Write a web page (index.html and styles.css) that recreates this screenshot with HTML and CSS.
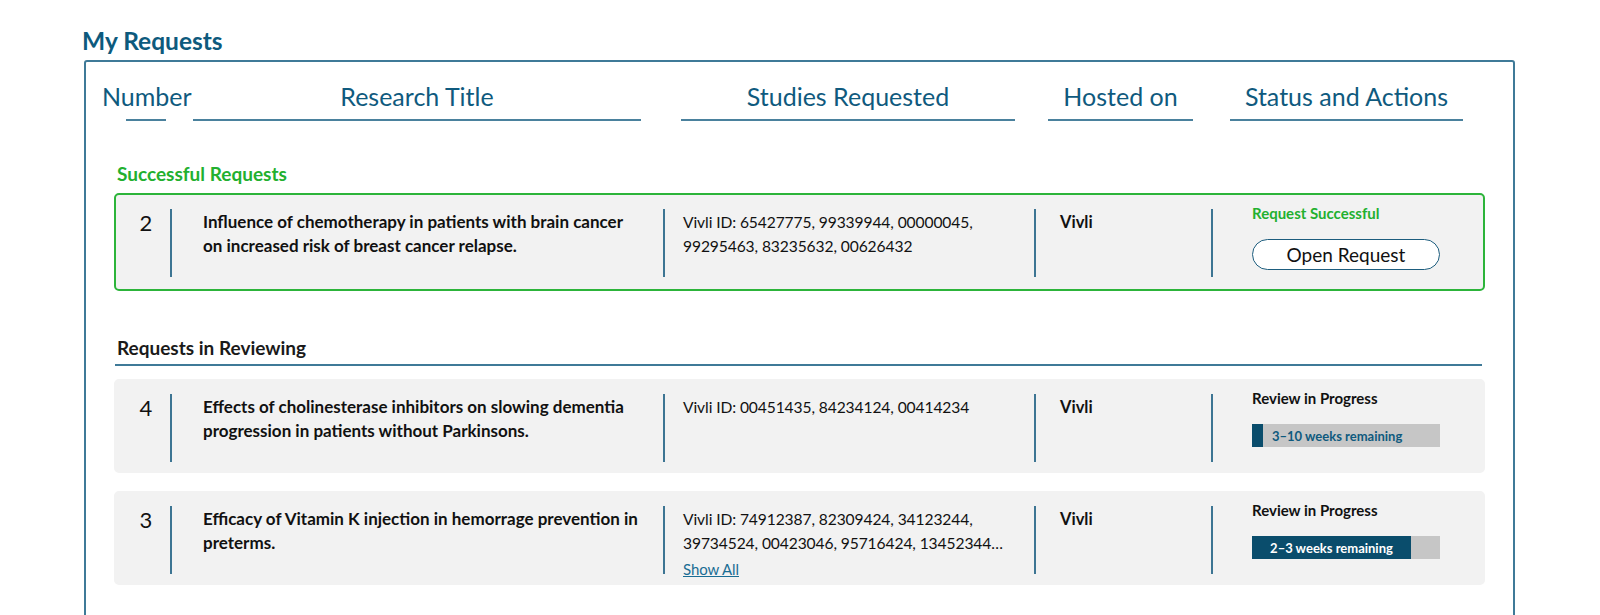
FILE: index.html
```html
<!DOCTYPE html>
<html lang="en">
<head>
<meta charset="utf-8">
<title>My Requests</title>
<link rel="stylesheet" href="styles.css">
</head>
<body>
<div class="page">
  <h1 class="page-title">My Requests</h1>
  <div class="panel">
    <div class="col-head">
      <div class="ch ch-num">Number</div>
      <div class="ch ch-title">Research Title</div>
      <div class="ch ch-studies">Studies Requested</div>
      <div class="ch ch-host">Hosted on</div>
      <div class="ch ch-status">Status and Actions</div>
    </div>

    <h2 class="group-label group-success">Successful Requests</h2>
    <div class="req req-success">
      <div class="cell c-num">2</div>
      <div class="cell c-title">Influence of chemotherapy in patients with brain cancer on increased risk of breast cancer relapse.</div>
      <div class="cell c-studies">Vivli ID: 65427775, 99339944, 00000045, 99295463, 83235632, 00626432</div>
      <div class="cell c-host">Vivli</div>
      <div class="cell c-status">
        <div class="status-label status-ok">Request Successful</div>
        <button class="btn-open" type="button">Open Request</button>
      </div>
    </div>

    <h2 class="group-label group-review">Requests in Reviewing</h2>
    <div class="req req-review">
      <div class="cell c-num">4</div>
      <div class="cell c-title">Effects of cholinesterase inhibitors on slowing dementia progression in patients without Parkinsons.</div>
      <div class="cell c-studies">Vivli ID: 00451435, 84234124, 00414234</div>
      <div class="cell c-host">Vivli</div>
      <div class="cell c-status">
        <div class="status-label">Review in Progress</div>
        <div class="bar">
          <div class="bar-fill" style="width: 11px"></div>
          <span class="bar-text bar-text-out">3–10 weeks remaining</span>
        </div>
      </div>
    </div>

    <div class="req req-review req-last">
      <div class="cell c-num">3</div>
      <div class="cell c-title">Efficacy of Vitamin K injection in hemorrage prevention in preterms.</div>
      <div class="cell c-studies">Vivli ID: 74912387, 82309424, 34123244, 39734524, 00423046, 95716424, 13452344…<br><a class="show-all" href="#">Show All</a></div>
      <div class="cell c-host">Vivli</div>
      <div class="cell c-status">
        <div class="status-label">Review in Progress</div>
        <div class="bar">
          <div class="bar-fill" style="width: 159px"><span class="bar-text bar-text-in">2–3 weeks remaining</span></div>
        </div>
      </div>
    </div>
  </div>
</div>
</body>
</html>
```

FILE: styles.css
```css
* { box-sizing: border-box; }

html, body {
  margin: 0;
  padding: 0;
  background: #ffffff;
  overflow: hidden;
}

body {
  font-family: Lato, "Liberation Sans", sans-serif;
  color: #111111;
}

.page {
  padding: 25px 85px 0 82px;
}

.page-title {
  margin: 0 0 3px 0;
  font-size: 24.5px;
  line-height: 32px;
  font-weight: 700;
  color: #0d5a7d;
}

.panel {
  margin-left: 2px;
  border: 2px solid #3f7a98;
  border-radius: 3px 3px 0 0;
  padding: 18px 30px 60px 29px;
}

/* column headers */
.col-head {
  display: flex;
  align-items: flex-end;
  margin-left: -13px;
}

.ch {
  font-size: 25px;
  line-height: 32px;
  color: #0f5a7e;
  text-align: center;
  padding-bottom: 7px;
  border-bottom: 2px solid #4a819d;
  white-space: nowrap;
}

.ch-num {
  width: 88px;
  padding-bottom: 0;
  border-bottom: 0;
}

.ch-num::after {
  content: "";
  display: block;
  width: 40px;
  height: 2px;
  margin: 7px auto 0;
  background: #4a819d;
}

.ch-title { width: 448px; margin-left: 3px; }
.ch-studies { width: 334px; margin-left: 40px; }
.ch-host { width: 145px; margin-left: 33px; }
.ch-status { width: 233px; margin-left: 37px; }

/* group labels */
.group-label {
  margin: 0;
  padding-left: 2px;
  font-size: 19px;
  line-height: 22px;
  font-weight: 700;
}

.group-success {
  color: #22b02f;
  margin-top: 42px;
  margin-bottom: 8px;
}

.group-review {
  color: #1a1a1a;
  margin-top: 46px;
  margin-bottom: 13px;
  padding-bottom: 5px;
  border-bottom: 2px solid #3f7a98;
  margin-right: 1px;
}

/* request cards */
.req {
  display: flex;
  align-items: flex-start;
  background: #f2f2f2;
  border: 2px solid #f2f2f2;
  border-radius: 5px;
  margin: 0 -2px 0 -1px;
  padding: 13px 0 9px 0;
}

.req-success {
  border-color: #2cb43a;
  padding: 14px 0 12px 0;
}

.req-review + .req-review {
  margin-top: 18px;
}

.cell {
  height: 68px;
}

.c-num {
  width: 54px;
  padding-left: 6px;
  padding-top: 2px;
  text-align: center;
  font-size: 22px;
  line-height: 24px;
}

.c-title,
.c-studies,
.c-host,
.c-status {
  border-left: 2px solid #3d7593;
}

.c-title {
  width: 493px;
  padding: 1px 23px 0 31px;
  font-size: 17px;
  line-height: 24px;
  font-weight: 700;
}

.c-studies {
  width: 371px;
  padding: 1px 8px 0 18px;
  font-size: 15.6px;
  letter-spacing: -0.1px;
  line-height: 24px;
}

.c-host {
  width: 177px;
  padding: 1px 0 0 24px;
  font-size: 16.5px;
  line-height: 24px;
  font-weight: 700;
}

.c-status {
  flex: 1;
  padding-left: 39px;
}

.show-all {
  font-size: 15px;
  line-height: 28px;
  color: #1a6d94;
  text-decoration: underline;
}

.status-label {
  margin-top: -5px;
  font-size: 15px;
  line-height: 18px;
  font-weight: 700;
  color: #111111;
}

.status-ok {
  color: #22b02f;
}

.btn-open {
  display: block;
  margin-top: 17px;
  width: 188px;
  height: 31px;
  padding: 0;
  background: #ffffff;
  border: 1.5px solid #1d5d7e;
  border-radius: 16px;
  font-family: Lato, "Liberation Sans", sans-serif;
  font-size: 19px;
  color: #111111;
  cursor: pointer;
}

.bar {
  display: flex;
  align-items: center;
  margin-top: 17px;
  width: 188px;
  height: 23px;
  background: #c6c6c6;
}

.bar-fill {
  height: 100%;
  background: #0a4d6c;
  display: flex;
  align-items: center;
  justify-content: center;
  flex: none;
}

.bar-text {
  font-size: 13px;
  font-weight: 700;
  white-space: nowrap;
}

.bar-text-out {
  color: #0f5a7e;
  margin-left: 9px;
}

.bar-text-in {
  color: #ffffff;
}
```
